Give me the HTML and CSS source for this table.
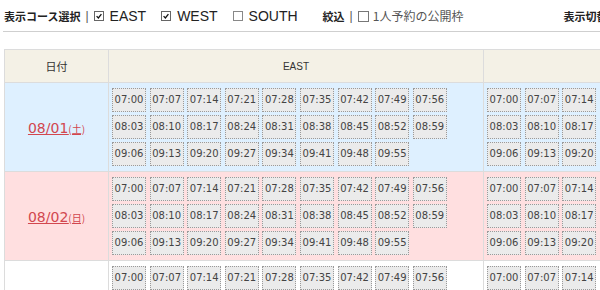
FILE: index.html
```html
<!DOCTYPE html>
<html lang="ja">
<head>
<meta charset="utf-8">
<title>予約枠</title>
<link rel="stylesheet" href="styles.css">
</head>
<body>
<div class="topbar">
  <span class="ttl">表示コース選択</span><span class="sep">|</span>
  <span class="cb on"><svg viewBox="0 0 10 10"><path d="M2 5.2 L4.2 7.4 L8 2.6" fill="none" stroke="#111" stroke-width="1.6"/></svg></span><span class="course">EAST</span>
  <span class="cb on"><svg viewBox="0 0 10 10"><path d="M2 5.2 L4.2 7.4 L8 2.6" fill="none" stroke="#111" stroke-width="1.6"/></svg></span><span class="course">WEST</span>
  <span class="cb"></span><span class="course">SOUTH</span>
  <span class="ttl narrow">絞込</span><span class="sep">|</span>
  <span class="cb small"></span><span class="opt">1人予約の公開枠</span>
  <span class="ttl right">表示切替</span>
</div>

<table class="grid">
  <colgroup><col class="c-date"><col class="c-course"><col class="c-course"></colgroup>
  <thead>
    <tr><th>日付</th><th class="en">EAST</th><th class="en">WEST</th></tr>
  </thead>
  <tbody id="rows"></tbody>
</table>
<script src="app.js"></script>
</body>
</html>
```

FILE: app.js
```js
const times = ["07:00","07:07","07:14","07:21","07:28","07:35","07:42","07:49","07:56",
"08:03","08:10","08:17","08:24","08:31","08:38","08:45","08:52","08:59",
"09:06","09:13","09:20","09:27","09:34","09:41","09:48","09:55"];
const days = [["08/01","土","sat"],["08/02","日","sun"],["08/03","月","wk"]];
const slots = () => '<div class="slots">' + times.map(t => '<span class="slot">' + t + '</span>').join('') + '</div>';
document.getElementById('rows').innerHTML = days.map(d =>
  '<tr class="' + d[2] + '"><td class="date"><a href="#">' + d[0] + '<small>(' + d[1] + ')</small></a></td><td>' + slots() + '</td><td>' + slots() + '</td></tr>'
).join('');
```

FILE: styles.css
```css
html, body { margin: 0; padding: 0; overflow: hidden; background: #fff; }
body { font-family: "DejaVu Sans", "Noto Sans CJK JP", sans-serif; color: #333; width: 1000px; }

.topbar {
  display: flex;
  align-items: center;
  height: 31px;
  margin-left: 3px;
  padding-left: 1px;
  border-bottom: 1px solid #cfcfcf;
  white-space: nowrap;
}
.ttl { font-family: "Noto Sans CJK JP", sans-serif; font-weight: bold; font-size: 11px; color: #222; }
.narrow { margin-left: 10px; }
.right { margin-left: 100px; }
.sep { font-family: "Liberation Sans", sans-serif; font-size: 12px; color: #555; margin: 0 5px 0 5px; }
.cb {
  display: inline-flex;
  width: 10px; height: 10px;
  border: 1px solid #888;
  background: #fff;
  box-sizing: border-box;
  margin-top: 1px;
}
.cb.on { border-color: #666; }
.cb svg { width: 100%; height: 100%; }
.cb.small { width: 11px; height: 11px; border-color: #777; }
.course { font-family: "Liberation Sans", sans-serif; font-size: 14px; color: #222; margin: 0 15px 0 6px; }
.opt { font-family: "Noto Sans CJK JP", sans-serif; font-size: 12px; color: #555; margin-left: 4px; }

.grid {
  margin: 17px 0 0 4px;
  border-collapse: collapse;
  table-layout: fixed;
  width: 855px;
}
.c-date { width: 104px; }
.c-course { width: 375px; }
.grid th, .grid td { border: 1px solid #dcdcdc; padding: 0; }
.grid th {
  height: 32px;
  background: #f4f1e6;
  font-family: "Noto Sans CJK JP", sans-serif;
  font-weight: normal;
  font-size: 11px;
  color: #333;
}
.grid th.en { font-family: "Liberation Sans", sans-serif; font-size: 10px; }
.sat td { background: #def0ff; }
.sun td { background: #ffdfe0; }
.wk td { background: #fff; }
.date { text-align: center; vertical-align: middle; }
.date a { color: #d2474f; text-decoration: underline; font-size: 14px; font-family: "DejaVu Sans", sans-serif; }
.date small { font-size: 10px; font-family: "Noto Sans CJK JP", sans-serif; }

.slots {
  display: flex;
  flex-wrap: wrap;
  gap: 3px 3.6px;
  padding: 5px 3px 5px 3px;
}
.slot {
  width: 34px;
  height: 24px;
  box-sizing: border-box;
  border: 1px dotted #9a9a9a;
  background: #ebebeb;
  display: flex;
  align-items: center;
  justify-content: center;
  font-family: "DejaVu Sans", sans-serif;
  font-size: 10px;
  color: #444;
  padding-bottom: 1px;
}
```
